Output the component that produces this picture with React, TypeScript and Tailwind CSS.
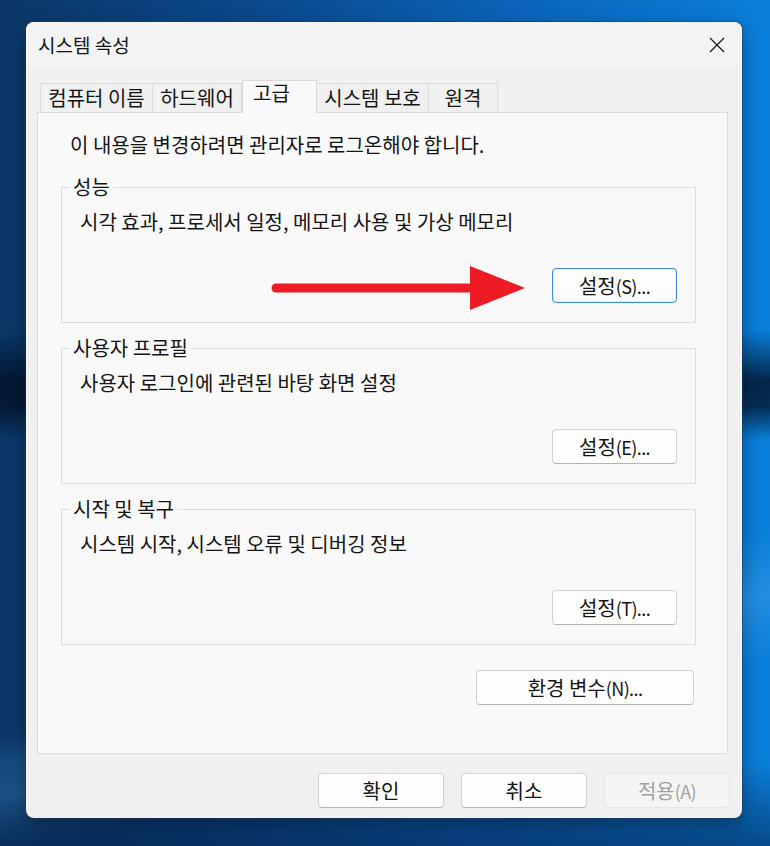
import React from "react";

const FONT = "font-['Noto_Sans_CJK_KR','Noto_Sans',sans-serif]";

function Label({ text }: { text: string }) {
  const m = text.match(/^([^(]*)(\(.*)$/);
  if (!m) return <span>{text}</span>;
  return (
    <span>
      {m[1]}
      <span className="text-[18px] tracking-[-0.6px]">{m[2]}</span>
    </span>
  );
}

function Btn({
  label,
  w,
  focused = false,
  disabled = false,
  extra = "",
}: {
  label: string;
  w: string;
  focused?: boolean;
  disabled?: boolean;
  extra?: string;
}) {
  let cls =
    "h-[35px] rounded-[4px] flex items-center justify-center text-[20px] leading-[24px] shrink-0 ";
  if (disabled) {
    cls += "bg-[#f5f5f5] border border-[#e6e6e6] text-[#a0a0a0] ";
  } else if (focused) {
    cls +=
      "bg-[#fdfdfd] border-[1.5px] border-[#3c8be0] text-[#141414] shadow-[inset_0_0_0_0.5px_#cfe2f7] ";
  } else {
    cls +=
      "bg-[#fdfdfd] border border-[#d2d2d2] border-b-[#b4b4b4] text-[#141414] ";
  }
  return (
    <div className={cls + w + " " + extra}>
      <Label text={label} />
    </div>
  );
}

function Group({
  title,
  desc,
  btn,
  focused = false,
  extra = "",
}: {
  title: string;
  desc: string;
  btn: string;
  focused?: boolean;
  extra?: string;
}) {
  return (
    <fieldset
      className={
        "border border-[#dcdcdc] pl-[8px] pr-[18px] pb-[19px] flex flex-col " +
        extra
      }
    >
      <legend className="px-[3px] text-[20px] leading-[24px] text-[#141414]">
        {title}
      </legend>
      <div className="pl-[10px] pt-[11px] text-[20px] leading-[24px] text-[#141414]">
        {desc}
      </div>
      <div className="flex justify-end mt-[34px]">
        <Btn label={btn} w="w-[125px]" focused={focused} />
      </div>
    </fieldset>
  );
}

export default function App() {
  const tabs = [
    { label: "컴퓨터 이름", w: "w-[113px]", first: true },
    { label: "하드웨어", w: "w-[89px]" },
    { label: "고급", w: "w-[75px]", selected: true },
    { label: "시스템 보호", w: "w-[112px]" },
    { label: "원격", w: "w-[69px]" },
  ];
  return (
    <div
      className={
        "w-[770px] h-[846px] overflow-hidden pt-[22px] pl-[26px] " +
        FONT +
        " bg-[linear-gradient(180deg,rgba(0,0,0,0)_39%,rgba(2,16,38,0.8)_45%,rgba(2,16,38,0.75)_48%,rgba(0,0,0,0)_52%),linear-gradient(180deg,rgba(0,0,0,0)_90%,rgba(4,30,70,0.55)_100%),linear-gradient(165deg,rgba(0,0,0,0)_0%,rgba(0,0,0,0)_70%,rgba(80,170,240,0.35)_76%,rgba(0,0,0,0)_82%),linear-gradient(90deg,#0a3767_0%,#0a4a8e_35%,#0a66bd_70%,#0a7fd9_100%)]"
      }
    >
      <div className="w-[716px] h-[796px] rounded-[8px] bg-[#f0f0f0] flex flex-col shadow-[0_0_0_1px_rgba(40,60,90,0.55),0_6px_18px_rgba(0,0,0,0.35)] overflow-hidden">
        {/* Title bar */}
        <div className="h-[46px] bg-[#f3f3f3] flex items-center justify-between pl-[12px] pr-[18px] shrink-0">
          <span className="text-[19px] leading-[24px] text-[#141414]">
            시스템 속성
          </span>
          <svg width="16" height="16" viewBox="0 0 16 16" className="mr-[-1px]">
            <path
              d="M1 1 L15 15 M15 1 L1 15"
              stroke="#141414"
              strokeWidth="1.2"
              fill="none"
            />
          </svg>
        </div>

        {/* Body */}
        <div className="flex flex-col pl-[11px] pr-[14px] pt-[12px]">
          {/* Tabs */}
          <div className="flex items-end pl-[3px] h-[32px]">
            {tabs.map((t) =>
              t.selected ? (
                <div
                  key={t.label}
                  className={
                    "relative z-10 -mb-px h-[33px] bg-[#f9f9f9] border-t border-x border-[#d9d9d9] pl-[10px] text-[20px] leading-[24px] text-[#141414] " +
                    t.w
                  }
                >
                  {t.label}
                </div>
              ) : (
                <div
                  key={t.label}
                  className={
                    "h-[29px] bg-[#f0f0f0] border-t border-r border-[#dcdcdc] flex items-center justify-center text-[20px] leading-[24px] text-[#141414] " +
                    (t.first ? "border-l " : "") +
                    t.w
                  }
                >
                  {t.label}
                </div>
              )
            )}
          </div>

          {/* Panel */}
          <div className="relative h-[642px] bg-[#f9f9f9] border border-[#d9d9d9] pl-[23px] pr-[31px] pt-[20px] flex flex-col">
            <div className="pl-[9px] text-[20px] leading-[24px] text-[#141414]">
              이 내용을 변경하려면 관리자로 로그온해야 합니다.
            </div>
            <Group
              title="성능"
              desc="시각 효과, 프로세서 일정, 메모리 사용 및 가상 메모리"
              btn="설정(S)..."
              focused
              extra="mt-[18px]"
            />
            <Group
              title="사용자 프로필"
              desc="사용자 로그인에 관련된 바탕 화면 설정"
              btn="설정(E)..."
              extra="mt-[13px]"
            />
            <Group
              title="시작 및 복구"
              desc="시스템 시작, 시스템 오류 및 디버깅 정보"
              btn="설정(T)..."
              extra="mt-[13px]"
            />
            <div className="flex justify-end mt-[25px] pr-[2px]">
              <Btn label="환경 변수(N)..." w="w-[218px]" />
            </div>

            {/* Red annotation arrow */}
            <svg
              className="absolute left-[233px] top-[153px]"
              width="256"
              height="44"
              viewBox="0 0 256 44"
            >
              <line
                x1="5"
                y1="22"
                x2="202"
                y2="22"
                stroke="#ed1c24"
                strokeWidth="9"
                strokeLinecap="round"
              />
              <polygon points="199,0 254,22 199,44" fill="#ed1c24" />
            </svg>
          </div>

          {/* Bottom buttons */}
          <div className="flex justify-end gap-[17px] mt-[19px] mr-[-2px]">
            <Btn label="확인" w="w-[126px] h-[34px]" />
            <Btn label="취소" w="w-[126px] h-[34px]" />
            <Btn label="적용(A)" w="w-[126px] h-[34px]" disabled />
          </div>
        </div>
      </div>
    </div>
  );
}
